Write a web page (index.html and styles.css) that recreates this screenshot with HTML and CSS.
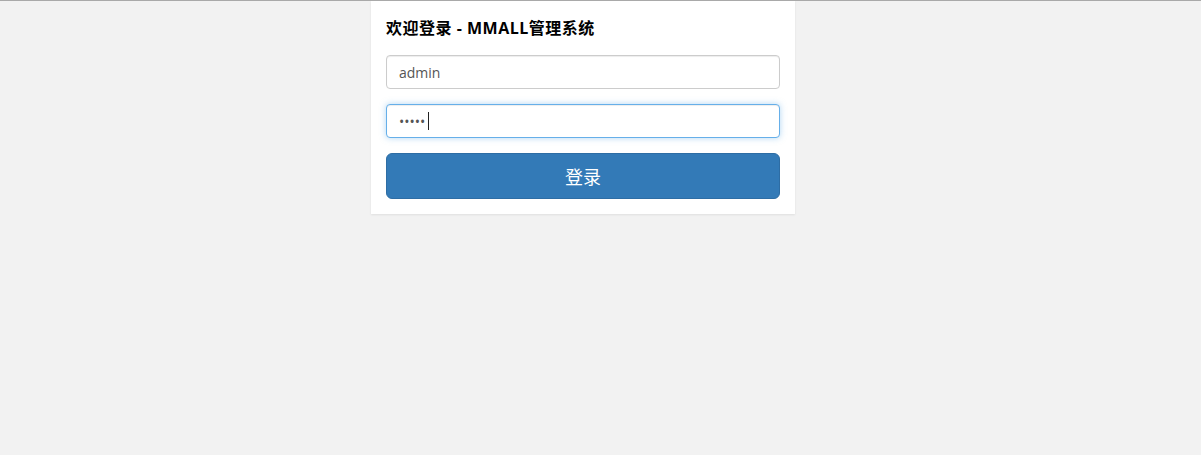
FILE: index.html
```html
<!DOCTYPE html>
<html lang="zh-CN">
<head>
<meta charset="utf-8">
<title>MMALL管理系统</title>
<link rel="stylesheet" href="styles.css">
</head>
<body>
<div class="page">
  <div class="panel">
    <h3 class="panel-title">欢迎登录 - MMALL管理系统</h3>
    <form class="login-form">
      <input class="form-control" type="text" value="admin">
      <div class="field">
        <input class="form-control focused" type="password" value="admin">
        <span class="caret-mark"></span>
      </div>
      <button class="btn-login" type="button">登录</button>
    </form>
  </div>
</div>
</body>
</html>
```

FILE: styles.css
```css
html, body {
  margin: 0;
  padding: 0;
}
body {
  background: #f2f2f2;
  border-top: 1px solid #a9a9a9;
  height: 454px;
  font-family: "Open Sans", "Noto Sans CJK SC", sans-serif;
}
.page {
  display: flex;
  padding-left: 371px;
}
.panel {
  width: 394px;
  background: #fff;
  padding: 15px;
  box-shadow: 0 1px 2px rgba(0, 0, 0, 0.08);
}
.panel-title {
  margin: 0 0 15px;
  font-size: 16px;
  line-height: 23px;
  padding-top: 1px;
  font-weight: bold;
  letter-spacing: 0.5px;
  color: #000;
}
.login-form {
  display: flex;
  flex-direction: column;
  gap: 15px;
  margin: 0;
}
.field {
  position: relative;
}
.form-control {
  display: block;
  width: 100%;
  box-sizing: border-box;
  height: 34px;
  padding: 6px 12px;
  font-family: "Open Sans", "Noto Sans CJK SC", sans-serif;
  font-size: 14px;
  color: #555;
  background: #fff;
  border: 1px solid #ccc;
  border-radius: 4px;
  box-shadow: inset 0 1px 1px rgba(0, 0, 0, 0.075);
  outline: none;
}
.form-control.focused {
  border-color: #66afe9;
  box-shadow: inset 0 1px 1px rgba(0, 0, 0, 0.075), 0 0 6px rgba(102, 175, 233, 0.5);
}
.caret-mark {
  position: absolute;
  left: 42px;
  top: 8px;
  width: 1px;
  height: 18px;
  background: #222;
}
.btn-login {
  display: block;
  width: 100%;
  height: 46px;
  padding: 0;
  font-family: "Open Sans", "Noto Sans CJK SC", sans-serif;
  font-size: 18px;
  color: #fff;
  background: #337ab7;
  border: 1px solid #2e6da4;
  border-radius: 6px;
  cursor: pointer;
}
```
